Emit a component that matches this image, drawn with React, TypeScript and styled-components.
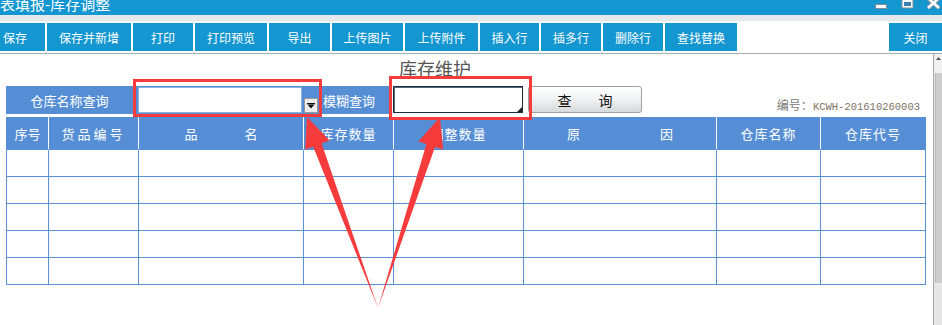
import React from 'react';
import styled, { createGlobalStyle } from 'styled-components';

const GlobalStyle = createGlobalStyle`
	html, body {
		margin: 0;
		padding: 0;
		background: #fff;
		overflow: hidden;
	}
	body {
		font-family: "Noto Sans CJK SC", "Noto Sans", sans-serif;
	}
`;

const BLUE = '#1496d0';
const GRID = '#5a8fd6';
const RED = '#f53b3b';

const Page = styled.div`
	position: relative;
	width: 942px;
	height: 325px;
	overflow: hidden;
	display: flex;
	flex-direction: column;
`;

const TitleBar = styled.div`
	height: 15px;
	background: ${BLUE};
	display: flex;
	justify-content: space-between;
	overflow: hidden;
`;

const TitleText = styled.div`
	color: #fff;
	font-size: 15px;
	line-height: 15px;
	margin-top: -4px;
	white-space: nowrap;
`;

const WinControls = styled.div`
	display: flex;
	gap: 13px;
	padding-right: 2px;
	align-items: flex-start;
`;

const Strip = styled.div`
	height: 6px;
	background: #e6e8eb;
`;

const Toolbar = styled.div`
	display: flex;
	gap: 2px;
	padding: 2px 0;
	border-bottom: 1px solid #a3adb8;
	height: 28px;
`;

const ToolButton = styled.div<{ $w: number; $left?: boolean }>`
	width: ${p => p.$w}px;
	height: 28px;
	background: ${BLUE};
	color: #fff;
	font-size: 12px;
	display: flex;
	align-items: center;
	justify-content: ${p => (p.$left ? 'flex-start' : 'center')};
	padding-left: ${p => (p.$left ? '3px' : '0')};
	box-sizing: border-box;
	white-space: nowrap;
`;

const Spacer = styled.div`
	flex: 1;
`;

const Body = styled.div`
	flex: 1;
	display: flex;
`;

const Content = styled.div`
	flex: 1;
	padding-left: 6px;
	display: flex;
	flex-direction: column;
`;

const PageTitle = styled.div`
	width: 858px;
	height: 32px;
	box-sizing: border-box;
	padding-top: 3px;
	text-align: center;
	font-size: 18px;
	line-height: 22px;
	color: #555;
`;

const SearchRow = styled.div`
	display: flex;
	height: 28px;
	align-items: stretch;
`;

const SearchBar = styled.div`
	width: 385px;
	background: #558ed5;
	display: flex;
	align-items: center;
`;

const SearchLabel = styled.div<{ $w?: number }>`
	width: ${p => (p.$w ? `${p.$w}px` : 'auto')};
	flex: ${p => (p.$w ? 'none' : '1')};
	color: #fff;
	font-size: 13px;
	text-align: ${p => (p.$w ? 'center' : 'left')};
	padding-left: ${p => (p.$w ? '0' : '5px')};
`;

const SelectBox = styled.div`
	margin-left: 5px;
	width: 164px;
	height: 26px;
	background: #fff;
	border: 1px solid #8fb2e0;
	box-sizing: border-box;
`;

const DropButton = styled.div`
	align-self: flex-end;
	margin: 0 0 1px 2px;
	width: 14px;
	height: 15px;
	box-sizing: border-box;
	background: #ececec;
	border: 1px solid #9a9a9a;
	display: flex;
	align-items: center;
	justify-content: center;
`;

const FuzzyInput = styled.div`
	position: relative;
	margin-left: 2px;
	width: 130px;
	height: 27px;
	box-sizing: border-box;
	border: 1px solid #1d2c3e;
	box-shadow: inset 1px 1px 0 #56677a;
	background: #fff;
`;

const Grip = styled.div`
	position: absolute;
	right: 0;
	bottom: 0;
	width: 0;
	height: 0;
	border-left: 5px solid transparent;
	border-bottom: 5px solid #222;
`;

const QueryButton = styled.div`
	margin-left: 5px;
	width: 114px;
	height: 27px;
	box-sizing: border-box;
	border: 1px solid #9ba1a7;
	border-radius: 3px;
	background: linear-gradient(#ffffff, #f2f3f4 45%, #d6dadd);
	display: flex;
	align-items: center;
	justify-content: center;
	gap: 27px;
	font-size: 14px;
	color: #111;
`;

const SerialNo = styled.div`
	flex: 1;
	align-self: flex-end;
	text-align: right;
	padding-right: 13px;
	font-size: 12px;
	line-height: 14px;
	color: #777;
	white-space: nowrap;
`;

const SerialCode = styled.span`
	font-family: "Liberation Mono", monospace;
	font-size: 10.5px;
	color: #7d7262;
`;

const Grid = styled.div<{ $cols: string; $rows: number }>`
	margin-top: 3px;
	display: grid;
	grid-template-columns: ${p => p.$cols};
	grid-template-rows: 33px repeat(${p => p.$rows}, 27px);
	width: max-content;
	border-left: 1px solid ${GRID};
`;

const HeadCell = styled.div<{ $ls?: number; $last?: boolean }>`
	background: #558ed5;
	color: #fff;
	font-size: 13px;
	letter-spacing: ${p => p.$ls ?? 0}px;
	display: flex;
	align-items: center;
	justify-content: center;
	border-right: 1px solid ${p => (p.$last ? GRID : '#fff')};
	border-bottom: 1px solid ${GRID};
	box-sizing: border-box;
	white-space: nowrap;
`;

const Spread = styled.span<{ $gap: number }>`
	display: inline-flex;
	gap: ${p => p.$gap}px;
`;

const Cell = styled.div`
	border-right: 1px solid ${GRID};
	border-bottom: 1px solid ${GRID};
	box-sizing: border-box;
`;

const Scrollbar = styled.div`
	width: 8px;
	border-left: 1px solid #a9a9a9;
	display: flex;
	flex-direction: column;
	background: #e6e6e6;
`;

const ScrollArrow = styled.div`
	height: 19px;
	background: #f0f0f0;
	display: flex;
	justify-content: center;
	padding-top: 3px;
	box-sizing: border-box;
`;

const ScrollThumb = styled.div`
	height: 210px;
	margin-left: 1px;
	background: #cdcdcd;
	border-left: 1px solid #b8b8b8;
`;

const Overlay = styled.svg`
	position: absolute;
	left: 0;
	top: 0;
	pointer-events: none;
`;

const tools = [
	{ label: '保存', w: 45, left: true },
	{ label: '保存并新增', w: 84 },
	{ label: '打印', w: 60 },
	{ label: '打印预览', w: 72 },
	{ label: '导出', w: 61 },
	{ label: '上传图片', w: 71 },
	{ label: '上传附件', w: 73 },
	{ label: '插入行', w: 59 },
	{ label: '插多行', w: 60 },
	{ label: '删除行', w: 60 },
	{ label: '查找替换', w: 72 },
];

type Col = { w: number; label?: string; ls?: number; spread?: [string, string]; gap?: number };

const columns: Col[] = [
	{ w: 42, label: '序号' },
	{ w: 90, label: '货品编号', ls: 3 },
	{ w: 165, spread: ['品', '名'], gap: 47 },
	{ w: 90, label: '库存数量', ls: 1 },
	{ w: 130, label: '调整数量', ls: 1 },
	{ w: 193, spread: ['原', '因'], gap: 80 },
	{ w: 104, label: '仓库名称', ls: 1 },
	{ w: 105, label: '仓库代号', ls: 1 },
];

const ROWS = 5;

const App: React.FC = () => {
	const template = columns.map(c => `${c.w}px`).join(' ');

	return (
		<Page>
			<GlobalStyle />
			<TitleBar>
				<TitleText>表填报-库存调整</TitleText>
				<WinControls>
					<svg width="13" height="9" viewBox="0 0 13 9">
						<rect x="0.5" y="4.5" width="11" height="4" fill="#fff" stroke="#7d8f9e" />
					</svg>
					<svg width="13" height="9" viewBox="0 0 13 9">
						<rect x="1" y="-2" width="11" height="10" fill="#fff" stroke="#7d8f9e" />
						<rect x="3" y="2" width="7" height="4" fill="#3a7fb5" />
					</svg>
					<svg width="13" height="9" viewBox="0 0 13 9">
						<path d="M1 -2 L12 8 M12 -2 L1 8" stroke="#7d8f9e" strokeWidth="4.5" />
						<path d="M1 -2 L12 8 M12 -2 L1 8" stroke="#fff" strokeWidth="2.5" />
					</svg>
				</WinControls>
			</TitleBar>
			<Strip />
			<Toolbar>
				{tools.map(t => (
					<ToolButton key={t.label} $w={t.w} $left={t.left}>
						{t.label}
					</ToolButton>
				))}
				<Spacer />
				<ToolButton $w={53}>关闭</ToolButton>
			</Toolbar>
			<Body>
				<Content>
					<PageTitle>库存维护</PageTitle>
					<SearchRow>
						<SearchBar>
							<SearchLabel $w={127}>仓库名称查询</SearchLabel>
							<SelectBox />
							<DropButton>
								<svg width="8" height="6" viewBox="0 0 8 6">
									<rect x="0" y="0" width="8" height="1.2" fill="#111" />
									<path d="M0.5 1.5 L7.5 1.5 L4 5.5 Z" fill="#111" />
								</svg>
							</DropButton>
							<SearchLabel>模糊查询</SearchLabel>
						</SearchBar>
						<FuzzyInput>
							<Grip />
						</FuzzyInput>
						<QueryButton>
							<span>查</span>
							<span>询</span>
						</QueryButton>
						<SerialNo>
							编号：<SerialCode>KCWH-201610260003</SerialCode>
						</SerialNo>
					</SearchRow>
					<Grid $cols={template} $rows={ROWS}>
						{columns.map((c, i) => (
							<HeadCell key={i} $ls={c.ls} $last={i === columns.length - 1}>
								{c.spread ? (
									<Spread $gap={c.gap ?? 0}>
										<span>{c.spread[0]}</span>
										<span>{c.spread[1]}</span>
									</Spread>
								) : (
									c.label
								)}
							</HeadCell>
						))}
						{Array.from({ length: ROWS * columns.length }).map((_, i) => (
							<Cell key={i} />
						))}
					</Grid>
				</Content>
				<Scrollbar>
					<ScrollArrow>
						<svg width="5" height="3" viewBox="0 0 5 3">
							<path d="M0 3 L2.5 0 L5 3 Z" fill="#555" />
						</svg>
					</ScrollArrow>
					<ScrollThumb />
				</Scrollbar>
			</Body>
			<Overlay width="942" height="325" viewBox="0 0 942 325">
				<rect x="134.5" y="80.5" width="186" height="35" fill="none" stroke={RED} strokeWidth="3" />
				<rect x="390.5" y="77.5" width="140" height="41" fill="none" stroke={RED} strokeWidth="3" />
				<polygon
					points="378,308 321.6,143.5 329.6,140.6 307,117 305.2,149.6 313.2,146.7"
					fill={RED}
				/>
				<polygon
					points="378,308 426.4,144.1 418.3,141.5 440,117 443.1,149.5 435,146.9"
					fill={RED}
				/>
			</Overlay>
		</Page>
	);
};

export default App;
